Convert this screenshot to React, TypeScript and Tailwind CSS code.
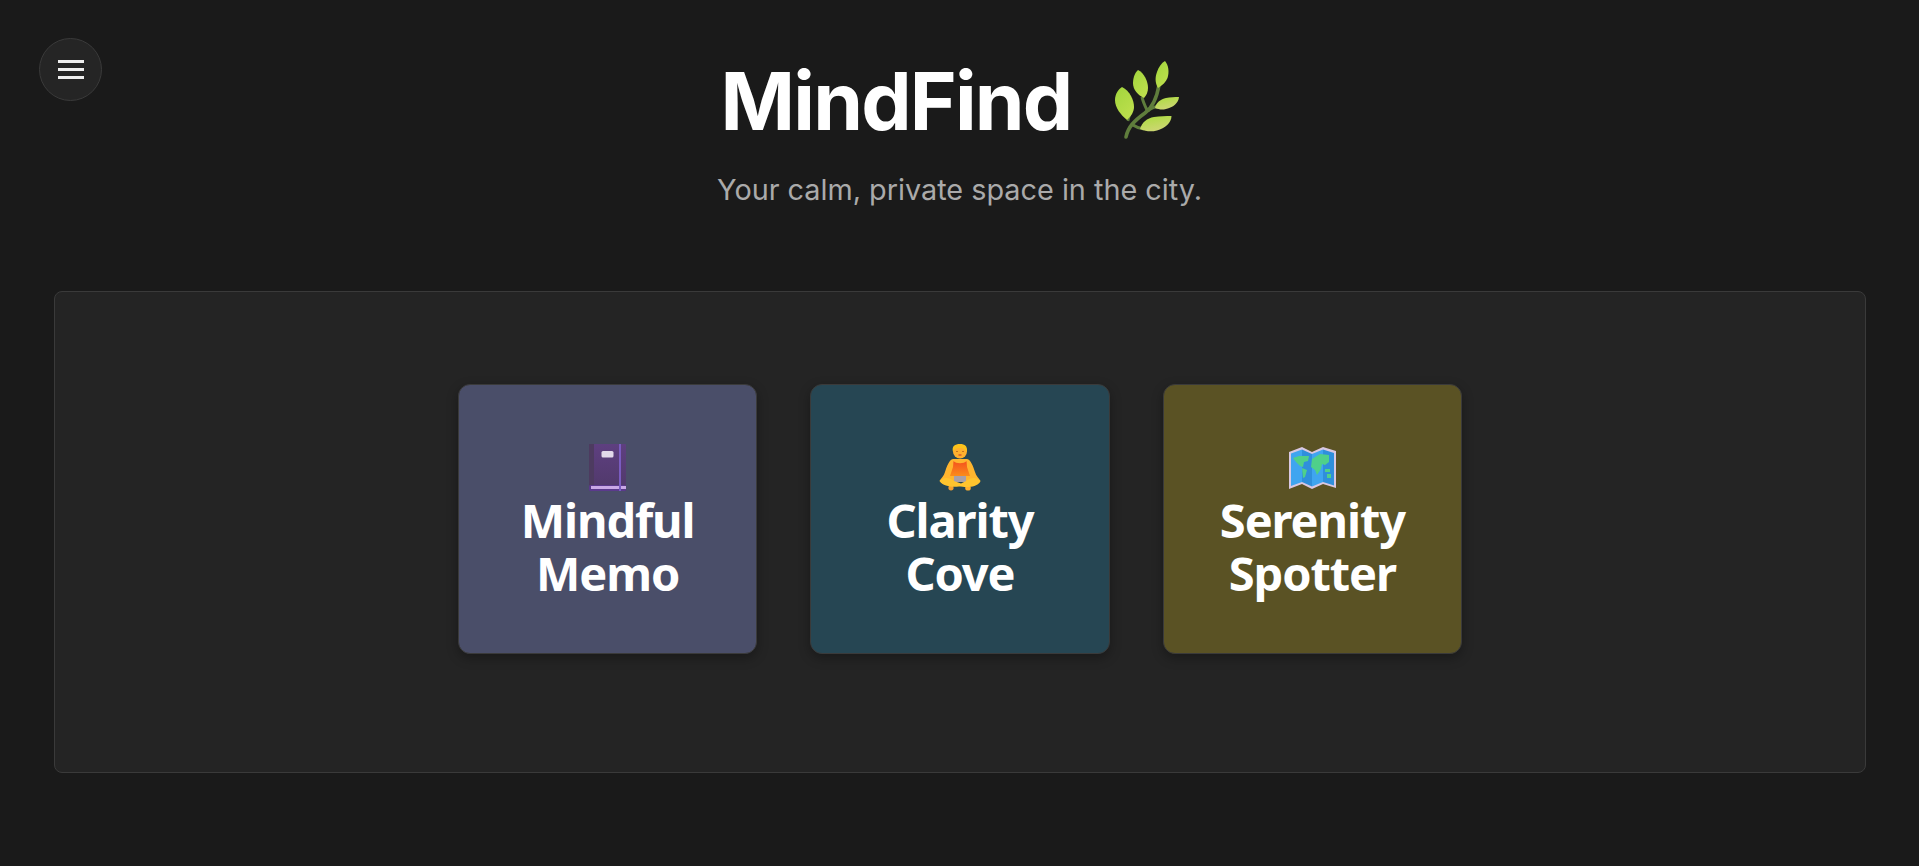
import React from "react";

const LeafIcon = () => (
  <svg viewBox="14 6 66 80" className="w-[66px] h-[80px] shrink-0">
    <defs>
      <linearGradient id="leafA" x1="0.2" y1="0" x2="0.8" y2="1">
        <stop offset="0" stopColor="#a4d63e" />
        <stop offset="1" stopColor="#bfe04e" />
      </linearGradient>
      <linearGradient id="leafB" x1="0.3" y1="0" x2="0.7" y2="1">
        <stop offset="0" stopColor="#aedc42" />
        <stop offset="1" stopColor="#d0d678" />
      </linearGradient>
    </defs>
    <path d="M25 82 C27 72 33 66 44 58 C52 52 56 42 58 30" fill="none" stroke="#5f7d3c" strokeWidth="3.6" strokeLinecap="round" />
    <path d="M30 69 C33 71 37 73 43 74" fill="none" stroke="#5f7d3c" strokeWidth="3" />
    <path d="M27 66 C28 60 31 56 31 51" fill="none" stroke="#5f7d3c" strokeWidth="2.6" />
    <path d="M47 56 C50 53 53 52 58 51" fill="none" stroke="#5f7d3c" strokeWidth="3" />
    <path d="M46 55 C44 51 42 47 41 42" fill="none" stroke="#5f7d3c" strokeWidth="3" />
    <path d="M21 32 C29 36 33 45 33 52 C33 57 30 61 26 65 C20 60 14 53 14 45 C14 39 17.5 34 21 32 Z" fill="url(#leafA)" />
    <path d="M37 15 C43 18 47 26 47 33 C47 37 45.5 40 43 43 C37 40 32 35 32 28 C32 22 34.5 17 37 15 Z" fill="url(#leafA)" />
    <path d="M64 6 C67.5 10 68.5 17 66.5 23 C65 27 61.5 30 57 33 C54 28 54 22 56 17 C57.5 12 60.5 8 64 6 Z" fill="url(#leafA)" />
    <path d="M78 42 C77.5 48 72 52.5 65 54 C61 55 58 54.5 54 53 C55 47.5 60 44 65 43 C69 42.2 74 42 78 42 Z" fill="url(#leafB)" />
    <path d="M70.5 61 C70.5 67.5 64 73.5 56 75.5 C50 77 45 76.5 39 74 C41 67.5 46 63 53 62 C59 61 65 61 70.5 61 Z" fill="url(#leafB)" />
  </svg>
);

const BookIcon = () => (
  <svg viewBox="9 9 37 47" className="w-[37px] h-[47px]">
    <defs>
      <linearGradient id="bookCover" x1="0" y1="0" x2="0" y2="1">
        <stop offset="0" stopColor="#5e3f80" />
        <stop offset="1" stopColor="#50396a" />
      </linearGradient>
    </defs>
    <path d="M9 9 H45 Q46 9 46 10 V56 H11 Q9 56 9 54 Z" fill="url(#bookCover)" />
    <rect x="9" y="9" width="5" height="41" fill="#4d3b60" />
    <rect x="9" y="50" width="37" height="6" rx="1.5" fill="#5b3a8c" />
    <rect x="11" y="51" width="35" height="3" fill="#c9a8e6" />
    <rect x="21.5" y="16" width="12" height="6.5" rx="1.5" fill="#e2d9ea" />
    <rect x="39" y="9" width="2" height="47" fill="#7a5cc0" />
  </svg>
);

const MeditateIcon = () => (
  <svg viewBox="9 9 42 47" className="w-[42px] h-[47px]">
    <defs>
      <linearGradient id="tank" x1="0" y1="0" x2="0" y2="1">
        <stop offset="0" stopColor="#f4511e" />
        <stop offset="1" stopColor="#fb8c1a" />
      </linearGradient>
    </defs>
    <path d="M23 24 H37 C41 25 43 31 45 37 C46 41 49 43 50.5 46 L36 47 H24 L9.5 46 C11 43 14 41 15 37 C17 31 19 25 23 24 Z" fill="#ffb52e" />
    <path d="M23.5 26 C26 29 34 29 36.5 26 L37 32 L40 41 H20 L23 32 Z" fill="url(#tank)" />
    <rect x="24" y="41" width="12" height="6" fill="#a9a0a8" />
    <ellipse cx="21" cy="53" rx="2.6" ry="2.4" fill="#f59f30" />
    <ellipse cx="38" cy="53" rx="2.8" ry="2.6" fill="#ffb02e" />
    <path d="M9.5 46 C13 42 19 42 24 46 L31 48.5 L36 46 C41 42 47 42 50.5 46 C49 50 44 51.5 39 52 C35 52.5 32 51.5 29 51.5 C25 52 20 52 16 50.5 C13 49.5 11 48 9.5 46 Z" fill="#ffc42e" />
    <circle cx="30" cy="16.5" r="7" fill="#ffb02e" />
    <path d="M23 17 C21.5 11 25 9 30 9 C35 9 37.5 11 37 17 C35 13.5 32 13 29 13 C26 13 24 14 23 17 Z" fill="#fcc21b" />
    <path d="M26 16.5 H28 M32 16.5 H34" stroke="#b5651d" strokeWidth="0.8" />
    <path d="M28.5 20 H31.5" stroke="#c4302b" strokeWidth="1" />
  </svg>
);

const MapIcon = () => (
  <svg viewBox="7 11 47 42" className="w-[47px] h-[42px]">
    <path d="M7 16 L20 11 L30 16 L41 11 L54 15 V52 L41 48 L30 53 L20 48 L7 53 Z" fill="#d9c8e2" />
    <path d="M9 17.5 L20 13.5 V46 L9 50 Z" fill="#3fa5f0" />
    <path d="M20 13.5 L30 18 V50.5 L20 46 Z" fill="#2f8fdc" />
    <path d="M30 18 L41 13.5 V46 L30 50.5 Z" fill="#3fa5f0" />
    <path d="M41 13.5 L52 17 V49.5 L41 46 Z" fill="#2f8fdc" />
    <path d="M11 22 L17 20 L27 20 L26 25 L22 26 L21 31 L18 30 L14 26 Z" fill="#4fd08a" />
    <path d="M20 32 L25 34 L23 41 L21 42 Z" fill="#4fd08a" />
    <path d="M30 23 L38 18 L47 19 L47 26 L43 29 L40 28 L39 33 L35 39 L33 34 L29 31 Z" fill="#4fd08a" />
    <rect x="43" y="33" width="5" height="3" fill="#4fd08a" />
    <rect x="45" y="38" width="4" height="4" fill="#4fd08a" />
  </svg>
);

const cards = [
  { title: "Mindful Memo", icon: <BookIcon />, bg: "bg-[#4a4e69]" },
  { title: "Clarity Cove", icon: <MeditateIcon />, bg: "bg-[#264653]" },
  { title: "Serenity Spotter", icon: <MapIcon />, bg: "bg-[#5a5224]" },
];

export default function App() {
  return (
    <div className="relative min-h-[866px] bg-[#1a1a1a] font-['Inter',sans-serif] text-white overflow-hidden">
      {/* Menu button */}
      <button className="absolute left-[39px] top-[38px] w-[63px] h-[63px] rounded-full bg-[#252525] border border-[#3a3a3a] flex flex-col items-center justify-center gap-[5.5px]">
        <span className="block w-[26px] h-[2.5px] bg-[#eeeeee]" />
        <span className="block w-[26px] h-[2.5px] bg-[#eeeeee]" />
        <span className="block w-[26px] h-[2.5px] bg-[#eeeeee]" />
      </button>

      {/* Header */}
      <header className="flex flex-col items-center pt-[56px]">
        <h1 className="flex items-center h-[90px] text-[80px] font-bold leading-none tracking-[-1.8px]">
          <span>MindFind</span>
          <span className="ml-[44px] mr-[17px]">
            <LeafIcon />
          </span>
        </h1>
        <p className="mt-[24px] text-[28.8px] leading-[40px] text-[#aaaaaa]">Your calm, private space in the city.</p>
      </header>

      {/* Cards panel */}
      <main className="ml-[54px] mr-[53px] mt-[81px] h-[482px] rounded-lg bg-[#242424] border border-[#3a3a3a] flex items-start justify-center gap-[52.8px] pt-[92px]">
        {cards.map((card) => (
          <div
            key={card.title}
            className={`w-[299.6px] h-[270px] rounded-xl border border-[#3a3a3a] shadow-[0_4px_12px_rgba(0,0,0,0.3)] flex flex-col items-center pt-[59px] px-8 ${card.bg}`}
          >
            <div className="h-[47px] flex items-center justify-center">{card.icon}</div>
            <h2 className="mt-[3px] font-['Noto_Sans',sans-serif] text-[47px] font-bold leading-[53px] tracking-[-1.1px] text-center">
              {card.title}
            </h2>
          </div>
        ))}
      </main>
    </div>
  );
}
